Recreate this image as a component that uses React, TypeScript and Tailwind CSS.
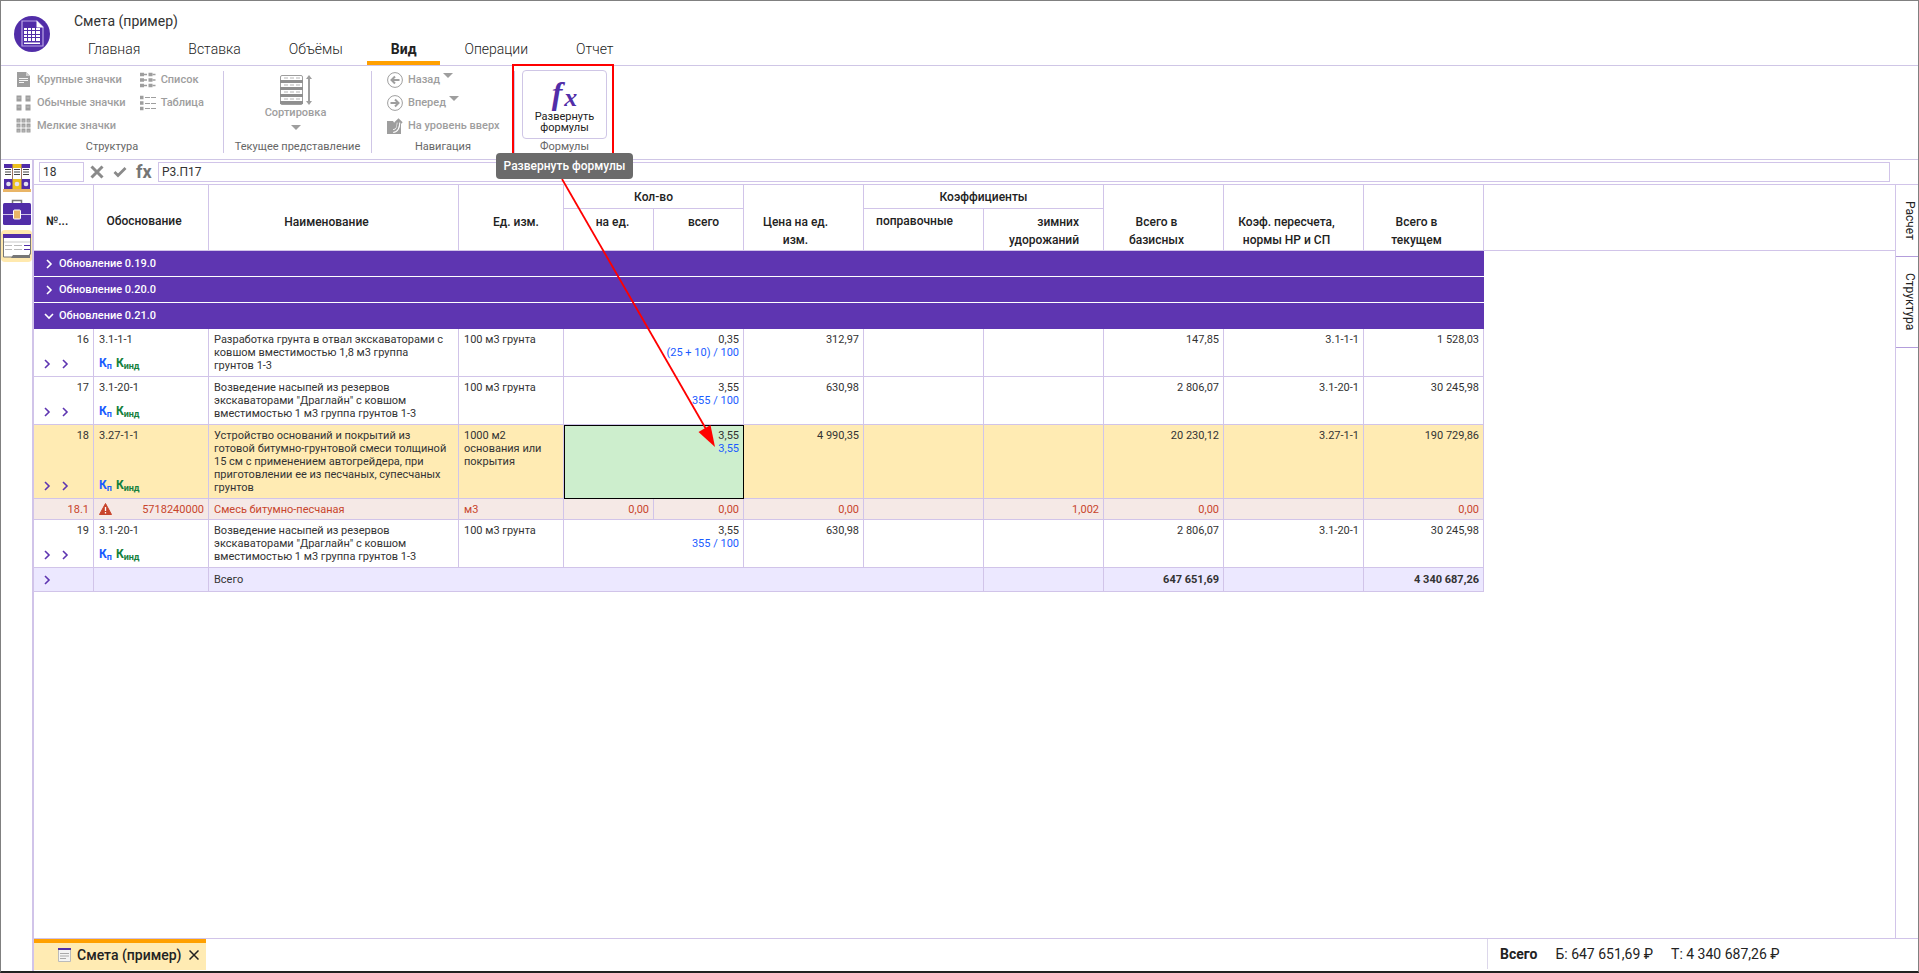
import type { ReactNode } from "react";
import clsx from "clsx";

const TABS = ["Главная", "Вставка", "Объёмы", "Вид", "Операции", "Отчет"];
const GROUPS = ["Обновление 0.19.0", "Обновление 0.20.0", "Обновление 0.21.0"];

type Row = {
  num: string;
  code: string;
  name: string;
  unit: string;
  total: string;
  formula: string;
  price: string;
  base: string;
  coef: string;
  current: string;
  selected?: boolean;
};

const embankment = {
  code: "3.1-20-1",
  name: 'Возведение насыпей из резервов экскаваторами "Драглайн" с ковшом вместимостью 1 м3 группа грунтов 1-3',
  unit: "100 м3 грунта",
  total: "3,55",
  formula: "355 / 100",
  price: "630,98",
  base: "2 806,07",
  coef: "3.1-20-1",
  current: "30 245,98",
};

const ROWS: Row[] = [
  {
    num: "16",
    code: "3.1-1-1",
    name: "Разработка грунта в отвал экскаваторами с ковшом вместимостью 1,8 м3 группа грунтов 1-3",
    unit: "100 м3 грунта",
    total: "0,35",
    formula: "(25 + 10) / 100",
    price: "312,97",
    base: "147,85",
    coef: "3.1-1-1",
    current: "1 528,03",
  },
  { num: "17", ...embankment },
  {
    num: "18",
    code: "3.27-1-1",
    name: "Устройство оснований и покрытий из готовой битумно-грунтовой смеси толщиной 15 см с применением автогрейдера, при приготовлении ее из песчаных, супесчаных грунтов",
    unit: "1000 м2 основания или покрытия",
    total: "3,55",
    formula: "3,55",
    price: "4 990,35",
    base: "20 230,12",
    coef: "3.27-1-1",
    current: "190 729,86",
    selected: true,
  },
];

const LAST_ROW: Row = { num: "19", ...embankment };

// ICONS
const LogoIcon = () => (
  <svg width="36" height="36" viewBox="0 0 36 36">
    <circle cx="18" cy="18" r="18" fill="#512da8" />
    <path d="M8 5h15l6 6v19H8z" fill="none" stroke="#b9a6e6" strokeWidth="1.2" />
    <path d="M22.500 4.500v7h7z" fill="#fff" />
    <path d="M10 12h16v13H10zM10 26.500h16v1.500H10z" fill="#fff" />
    <path d="M10 14.500h16M10 18.500h16M10 21.500h16M13.500 12v13M17.500 12v13M21.500 12v13" stroke="#512da8" />
  </svg>
);

const LargeIcon = () => (
  <svg width="16" height="16" viewBox="0 0 16 16">
    <path d="M1 0h9l4 4v11H1z" fill="#9e9e9e" />
    <path d="M10 0v4h4z" fill="#d0d0d0" />
    <path d="M3 6.500h9M3 8.500h9M3 10.500h5" stroke="#f5f5f5" />
  </svg>
);

const GridIcon = ({ cells }: { cells: number }) => {
  const step = cells === 2 ? 9 : 5;
  const width = cells === 2 ? 5 : 4;
  const height = cells === 2 ? 6 : 4;
  const idx = Array.from({ length: cells }, (_, i) => i);
  return (
    <svg width="16" height="16" viewBox="0 0 16 16">
      {idx.map((r) =>
        idx.map((c) => (
          <g key={`${r}-${c}`}>
            <rect x={c * step + 0.5} y={r * step + 0.5} width={width} height={height} fill="#9e9e9e" />
            <path d={`M${c * step + 1.5} ${r * step + 3}h${width - 2}`} stroke="#cfcfcf" strokeWidth="0.8" />
          </g>
        ))
      )}
    </svg>
  );
};

const ListIcon = () => (
  <svg width="16" height="16" viewBox="0 0 16 16" stroke="#9e9e9e">
    <path d="M0 2.500h4M0 8h4M0 13.500h4M8.500 2.500h4M8.500 8h4M8.500 13.500h4" strokeWidth="3.5" />
    <path d="M4 2.500h3M4 8h3M4 13.500h3M12.500 2.500h3M12.500 8h3M12.500 13.500h3" strokeWidth="1.5" />
  </svg>
);

const TableIcon = () => (
  <svg width="16" height="16" viewBox="0 0 16 16" stroke="#9e9e9e">
    <path d="M0 2.500h3.500M0 8h3.500M0 13.500h3.500" strokeWidth="3.5" />
    <path d="M5 2.500h5M11 2.500h5M5 8.500h5M11 8.500h5M5 13.500h5M11 13.500h5" />
  </svg>
);

const SortIcon = () => (
  <svg width="32" height="30" viewBox="0 0 32 30">
    <rect x="0.5" y="0.5" width="22" height="29" rx="1.5" fill="#fff" stroke="#9e9e9e" />
    <path d="M0 6.500h23M0 13.500h23M0 20.500h23M0 27.500h23" stroke="#8f8f8f" strokeWidth="3" />
    <path d="M4 3h4M10 3h4M16 3h4M4 10h4M10 10h4M16 10h4M4 17h4M10 17h4M16 17h4M4 24h4M10 24h4M16 24h4" stroke="#b5b5b5" />
    <path d="M29 3v24" stroke="#9e9e9e" strokeWidth="2" />
    <path d="M29 0l3 4h-6zM29 30l3-4h-6z" fill="#9e9e9e" />
  </svg>
);

const ArrowIcon = ({ back }: { back?: boolean }) => (
  <svg width="16" height="16" viewBox="0 0 16 16" fill="none" stroke="#9e9e9e">
    <circle cx="8" cy="8" r="7.4" />
    <path d={back ? "M12.500 8H5M8 4.500L4.500 8L8 11.500" : "M3.500 8H11M8 4.500L11.500 8L8 11.500"} strokeWidth="2" />
  </svg>
);

const LevelUpIcon = () => (
  <svg width="16" height="16" viewBox="0 0 16 16">
    <path d="M0 3h6l1 1.500h7V16H0z" fill="#9e9e9e" />
    <path d="M6 13c4 0 5.500-4 5.500-8" fill="none" stroke="#fff" strokeWidth="3.5" />
    <path d="M6 13c4 0 5.500-4 5.500-11M8 5l3.500-3.500L15 5" fill="none" stroke="#9e9e9e" strokeWidth="1.8" />
  </svg>
);

const Caret = () => (
  <svg width="10" height="5" viewBox="0 0 10 5">
    <path d="M0 0h10L5 5z" fill="#9e9e9e" />
  </svg>
);

const Chevron = ({ down, className }: { down?: boolean; className?: string }) => (
  <svg width="10" height="10" viewBox="0 0 10 10" className={className} fill="none" stroke="currentColor" strokeWidth="1.6">
    <path d={down ? "M1 3l4 4l4-4" : "M3 1l4 4l-4 4"} />
  </svg>
);

const BindersIcon = () => (
  <svg width="28" height="28" viewBox="0 0 28 28">
    <path d="M1 0h26v25H1z" fill="#512da8" />
    <path d="M9.500 0h9v25h-9z" fill="#ecc11e" />
    <path d="M1 4h8v11H1zM10 4h8v11h-8zM19 4h8v11h-8z" fill="#fff" />
    <path d="M2 5.500h6M2 8h6M2 10.500h6M11 5.500h6M11 8h6M11 10.500h6M20 5.500h6M20 8h6M20 10.500h6" stroke="#444" />
    <circle cx="5.5" cy="20" r="2.3" fill="#e4e0f0" />
    <circle cx="14" cy="20" r="2.3" fill="#e4e0f0" />
    <circle cx="23" cy="20" r="2.3" fill="#e4e0f0" />
    <path d="M0 25h28v3H0z" fill="#e9b567" />
  </svg>
);

const BriefcaseIcon = () => (
  <svg width="28" height="28" viewBox="0 0 28 28">
    <path d="M9.500 6V2.500h9V6" fill="none" stroke="#777" strokeWidth="1.5" />
    <rect x="0" y="5" width="28" height="22" rx="1.5" fill="#512da8" />
    <path d="M0 16.500h28" stroke="#d1c4e9" />
    <rect x="10.5" y="12" width="7" height="9" rx="1" fill="#e9b567" stroke="#fff" />
  </svg>
);

const FormIcon = () => (
  <svg width="28" height="25" viewBox="0 0 28 25">
    <path d="M0.500 1h27v19l-3 3H0.500z" fill="#fff" stroke="#777" />
    <path d="M0 0h28v4H0z" fill="#512da8" />
    <path d="M1 8h26" stroke="#e4e4e4" strokeWidth="2" />
    <path d="M2 11.500h7M11 11.500h8M2 15.500h7M11 15.500h8" stroke="#bbb" />
    <path d="M21 11.500h6M21 15.500h6" stroke="#512da8" />
    <path d="M8 24l2-3h16l1-2v5z" fill="#777" />
  </svg>
);

const RIBBON_TEXT = "text-[11px] leading-4 font-medium text-[#9e9e9e]";

const RibbonItem = ({ icon, label, caret }: { icon: ReactNode; label: string; caret?: boolean }) => (
  <button className={clsx("flex h-[23px] items-center gap-[5px] whitespace-nowrap", RIBBON_TEXT)}>
    {icon}
    <span>{label}</span>
    {caret && (
      <span className="-ml-[2px] self-start pt-[5px]">
        <Caret />
      </span>
    )}
  </button>
);

const RibbonGroup = ({ label, className, children }: { label: string; className: string; children: ReactNode }) => (
  <section className={clsx("flex h-[82px] flex-col justify-between", className)}>
    <div className="flex-1">{children}</div>
    <p className="text-center text-[11px] leading-3 whitespace-nowrap text-[#666]">{label}</p>
  </section>
);

const Header = () => (
  <header className="flex h-[65px] border-b border-[#cfc6e6]">
    <div className="pt-[15px] pl-[13px]">
      <LogoIcon />
    </div>
    <div className="flex flex-1 flex-col justify-between">
      <h1 className="pt-[10px] pl-6 text-sm leading-5 text-[#333]">Смета (пример)</h1>
      <nav className="flex pl-[14px]">
        {TABS.map((tab) => (
          <a
            key={tab}
            href="#"
            className={clsx(
              "h-[30px] border-b-4 px-6 pt-1 text-sm leading-5 text-[#222]",
              tab === "Вид" ? "border-[#ffa000] font-bold" : "border-transparent font-light"
            )}
          >
            {tab}
          </a>
        ))}
      </nav>
    </div>
  </header>
);

const Ribbon = () => (
  <div className="flex h-[94px] border-b border-[#cfc6e6] pt-[5px]">
    <RibbonGroup label="Структура" className="w-[223px] border-r border-[#cfc6e6]">
      <div className="-mt-[3px] flex gap-[14px] pl-[15px]">
        <div>
          <RibbonItem icon={<LargeIcon />} label="Крупные значки" />
          <RibbonItem icon={<GridIcon cells={2} />} label="Обычные значки" />
          <RibbonItem icon={<GridIcon cells={3} />} label="Мелкие значки" />
        </div>
        <div>
          <RibbonItem icon={<ListIcon />} label="Список" />
          <RibbonItem icon={<TableIcon />} label="Таблица" />
        </div>
      </div>
    </RibbonGroup>
    <RibbonGroup label="Текущее представление" className="w-[148px] border-r border-[#cfc6e6]">
      <button className={clsx("flex w-full flex-col items-center pt-1 pr-1", RIBBON_TEXT)}>
        <SortIcon />
        <span className="pb-1">Сортировка</span>
        <Caret />
      </button>
    </RibbonGroup>
    <RibbonGroup label="Навигация" className="w-[143px] border-r border-[#cfc6e6]">
      <div className="-mt-[3px] pl-[15px]">
        <RibbonItem icon={<ArrowIcon back />} label="Назад" caret />
        <RibbonItem icon={<ArrowIcon />} label="Вперед" caret />
        <RibbonItem icon={<LevelUpIcon />} label="На уровень вверх" />
      </div>
    </RibbonGroup>
    <div className="relative">
      <RibbonGroup label="Формулы" className="px-[7px]">
        <button className="-mt-px flex h-[69px] w-[85px] flex-col items-center rounded-[4px] border border-[#cfc6e6] pt-2 text-[11px] leading-[11px] text-[#222]">
          <span className="flex h-[32px] items-start gap-[2px] font-['Liberation_Serif',serif] font-bold text-[#512da8] italic">
            <span className="text-[32px] leading-7">f</span>
            <span className="pt-[9px] text-[26px] leading-5">x</span>
          </span>
          Развернуть формулы
        </button>
      </RibbonGroup>
      <div className="pointer-events-none absolute -top-[7px] -left-[3px] h-[91px] w-[102px] border-2 border-[#f00]" />
      <div
        role="tooltip"
        className="absolute top-[82px] -left-[19px] z-20 h-[26px] w-[137px] rounded-[4px] bg-[#6b6b6b] text-center text-xs leading-[26px] font-medium whitespace-nowrap text-white"
      >
        Развернуть формулы
      </div>
      <svg className="pointer-events-none absolute top-[108px] left-[46px] z-10" width="156" height="270" viewBox="0 0 156 270">
        <path d="M1 0L145 250" stroke="#f00" strokeWidth="1.8" />
        <path d="M154 268L137.500 253L149.500 246z" fill="#f00" />
      </svg>
    </div>
  </div>
);

const SideBar = () => (
  <aside className="flex w-[31px] flex-col pt-1">
    <button aria-label="Сметы" className="flex h-[34px] justify-center">
      <BindersIcon />
    </button>
    <button aria-label="Портфель" className="flex h-8 justify-center">
      <BriefcaseIcon />
    </button>
    <button aria-label="Документ" className="flex h-8 items-center justify-center rounded-[4px] bg-[#ffe9ae]">
      <FormIcon />
    </button>
  </aside>
);

const FormulaBar = () => (
  <div className="flex h-[25px] items-center border-b border-[#d1c4e9] pr-7 pl-[5px] text-[#333]">
    <input aria-label="Позиция" defaultValue="18" className="h-5 w-[45px] border border-[#d1c4e9] px-[3px] text-xs" />
    <button aria-label="Отменить" className="ml-[6px]">
      <svg width="14" height="14" viewBox="0 0 14 14" stroke="#8a8a8a" strokeWidth="3">
        <path d="M1.500 1.500l11 11M12.500 1.500l-11 11" />
      </svg>
    </button>
    <button aria-label="Применить" className="ml-[9px]">
      <svg width="14" height="12" viewBox="0 0 14 12" fill="none" stroke="#8a8a8a" strokeWidth="2.8">
        <path d="M1.500 6l3.500 3.500L12.500 2" />
      </svg>
    </button>
    <span className="ml-[9px] w-[22px] text-lg leading-5 font-bold text-[#757575]">fx</span>
    <input aria-label="Формула" defaultValue="Р3.П17" className="h-5 flex-1 border border-[#d1c4e9] px-[3px] text-xs" />
  </div>
);

const TH = "border-r border-b border-[#d1c4e9] align-top font-medium";

const Head = () => (
  <thead className="text-xs leading-[18px] text-[#222]">
    <tr className="h-6">
      <th rowSpan={2} className={clsx(TH, "pt-[27px] pl-3 text-left")}>№...</th>
      <th rowSpan={2} className={clsx(TH, "pt-[27px] pr-[14px]")}>Обоснование</th>
      <th rowSpan={2} className={clsx(TH, "pt-[28px] pr-[14px]")}>Наименование</th>
      <th rowSpan={2} className={clsx(TH, "pt-[28px] pl-[10px]")}>Ед. изм.</th>
      <th colSpan={2} className={clsx(TH, "pt-[3px]")}>Кол-во</th>
      <th rowSpan={2} className={clsx(TH, "pt-[28px] pr-6 pl-2")}>Цена на ед. изм.</th>
      <th colSpan={2} className={clsx(TH, "pt-[3px]")}>Коэффициенты</th>
      <th rowSpan={2} className={clsx(TH, "pt-[28px] pr-[30px] pl-4")}>Всего в базисных</th>
      <th rowSpan={2} className={clsx(TH, "pt-[28px] pr-[14px]")}>Коэф. пересчета, нормы НР и СП</th>
      <th rowSpan={2} className={clsx(TH, "pt-[28px] pr-[30px] pl-4")}>Всего в текущем</th>
      <th rowSpan={2} className="border-b border-[#d1c4e9]" />
    </tr>
    <tr className="h-[42px]">
      <th className={clsx(TH, "pt-1 pl-2")}>на ед.</th>
      <th className={clsx(TH, "pt-1 pl-[10px]")}>всего</th>
      <th className={clsx(TH, "pt-[3px] pr-[18px]")}>поправочные</th>
      <th className={clsx(TH, "pt-1 pr-6 text-right")}>зимних удорожаний</th>
    </tr>
  </thead>
);

const TD = "border-r border-b border-[#d1c4e9] pt-1 pb-[3px] pl-[5px] pr-1 align-top";
const NUM = "text-right";

const ItemRow = ({ row }: { row: Row }) => (
  <tr className={row.selected ? "h-[74px]" : "h-12"}>
    {[
      <div className="flex h-full flex-col justify-between">
        <span className="text-right">{row.num}</span>
        <span className="flex gap-2 pb-1 pl-[3px] text-[#5e35b1]">
          <Chevron />
          <Chevron />
        </span>
      </div>,
      <div className="flex h-full flex-col justify-between">
        <span>{row.code}</span>
        <span className="flex gap-1 pb-[3px] text-xs leading-[13px] font-bold">
          <span className="text-[#1a5cff]">К<sub className="text-[9px]">п</sub></span>
          <span className="text-[#15803d]">К<sub className="text-[9px]">инд</sub></span>
        </span>
      </div>,
    ].map((content, i) => (
      <td key={i} className={clsx(TD, row.selected ? "h-[74px] bg-[#ffebb3]" : "h-12")}>
        {content}
      </td>
    ))}
    <td className={clsx(TD, row.selected && "bg-[#ffebb3]")}>
      <div className="pr-[6px]">{row.name}</div>
    </td>
    <td className={clsx(TD, row.selected && "bg-[#ffebb3]")}>{row.unit}</td>
    <td colSpan={2} className={clsx(TD, NUM, row.selected && "bg-[#cdeecd] outline outline-offset-[-1px] outline-black")}>
      {row.total}
      <div className="text-[#1a5cff]">{row.formula}</div>
    </td>
    {[row.price, "", "", row.base, row.coef, row.current].map((value, i) => (
      <td key={i} className={clsx(TD, NUM, row.selected && "bg-[#ffebb3]")}>{value}</td>
    ))}
    <td />
  </tr>
);

const ResourceRow = () => (
  <tr className="h-[21px] text-[#c8452c]">
    <td className={clsx(TD, NUM, "bg-[#f5e9e6]")}>18.1</td>
    <td className={clsx(TD, "bg-[#f5e9e6]")}>
      <span className="flex justify-between">
        <svg width="13" height="12" viewBox="0 0 13 12">
          <path d="M6.500 0.500L12.500 11.500H0.500z" fill="#c8452c" stroke="#c8452c" strokeLinejoin="round" />
          <path d="M6.500 4v4M6.500 9v1.500" stroke="#fff" strokeWidth="1.3" />
        </svg>
        5718240000
      </span>
    </td>
    <td className={clsx(TD, "bg-[#f5e9e6]")}>Смесь битумно-песчаная</td>
    <td className={clsx(TD, "bg-[#f5e9e6]")}>м3</td>
    {["0,00", "0,00", "0,00", "", "1,002", "0,00", "", "0,00"].map((value, i) => (
      <td key={i} className={clsx(TD, NUM, "bg-[#f5e9e6]")}>{value}</td>
    ))}
    <td />
  </tr>
);

const SUM = "border-r border-b border-[#d1c4e9] bg-[#ece8ff] pl-[5px] pr-1";

const EstimateTable = () => (
  <table className="w-full table-fixed border-separate border-spacing-0 text-[11px] leading-[13px] text-[#333]">
    <colgroup>
      <col className="w-[60px]" />
      <col className="w-[115px]" />
      <col className="w-[250px]" />
      <col className="w-[105px]" />
      <col className="w-[90px]" />
      <col className="w-[90px]" />
      <col className="w-[120px]" />
      <col className="w-[120px]" />
      <col className="w-[120px]" />
      <col className="w-[120px]" />
      <col className="w-[140px]" />
      <col className="w-[120px]" />
      <col />
    </colgroup>
    <Head />
    <tbody>
      {GROUPS.map((group, i) => (
        <tr key={group} className="h-[26px]">
          <td
            colSpan={12}
            className={clsx(
              "border-b bg-[#5e35b1] pl-[10px] font-medium text-white",
              i < 2 ? "border-white" : "border-[#5e35b1]"
            )}
          >
            <span className="flex items-center gap-[5px]">
              <Chevron down={i === 2} />
              {group}
            </span>
          </td>
          <td />
        </tr>
      ))}
      {ROWS.map((row) => (
        <ItemRow key={row.num} row={row} />
      ))}
      <ResourceRow />
      <ItemRow row={LAST_ROW} />
      <tr className="h-6">
        <td className={SUM}>
          <Chevron className="ml-[3px] text-[#5e35b1]" />
        </td>
        <td className={SUM} />
        <td colSpan={6} className={SUM}>Всего</td>
        <td className={SUM} />
        <td className={clsx(SUM, NUM, "font-bold")}>647 651,69</td>
        <td className={SUM} />
        <td className={clsx(SUM, NUM, "font-bold")}>4 340 687,26</td>
        <td />
      </tr>
    </tbody>
  </table>
);

const SidePanels = () => (
  <div className="flex w-[23px] flex-col border-l border-[#d1c4e9] text-xs text-[#222]">
    <button className="h-[72px] border-b border-[#b39ddb] pl-[5px] [writing-mode:vertical-rl]">Расчет</button>
    <button className="h-[91px] border-b border-[#b39ddb] pl-[5px] [writing-mode:vertical-rl]">Структура</button>
  </div>
);

const Footer = () => (
  <footer className="flex h-8 justify-between text-sm text-[#222]">
    <div className="flex h-[31px] w-[172px] items-center border-t-4 border-[#ffa000] bg-[#ffebb3] pb-1 pl-6 font-medium">
      <svg width="13" height="14" viewBox="0 0 13 14" className="mr-[6px]">
        <path d="M0.500 0.500h12v13h-12z" fill="#f4f4f4" stroke="#bbb" />
        <path d="M0 0h13v2H0z" fill="#512da8" />
        <path d="M2 5.500h9M2 8h9M2 10.500h6" stroke="#aaa" />
      </svg>
      <a href="#">Смета (пример)</a>
      <button aria-label="Закрыть" className="ml-2">
        <svg width="10" height="10" viewBox="0 0 10 10" stroke="#222" strokeWidth="1.5">
          <path d="M0.500 0.500l9 9M9.500 0.500l-9 9" />
        </svg>
      </button>
    </div>
    <div className="flex h-[30px] w-[431px] items-center gap-[18px] border-l border-[#dcd7ea] pl-3">
      <b className="font-bold">Всего</b>
      <span>Б: 647 651,69 ₽</span>
      <span>Т: 4 340 687,26 ₽</span>
    </div>
  </footer>
);

export default function App() {
  return (
    <div className="flex h-screen flex-col border border-b-2 border-[#808080] border-b-[#222] bg-white font-['Roboto',sans-serif]">
      <Header />
      <Ribbon />
      <div className="flex min-h-0 flex-1">
        <SideBar />
        <div className="flex min-w-0 flex-1 flex-col border-l-2 border-[#d1c4e9]">
          <FormulaBar />
          <main className="flex min-h-0 flex-1 border-b border-[#d1c4e9]">
            <div className="min-w-0 flex-1">
              <EstimateTable />
            </div>
            <SidePanels />
          </main>
          <Footer />
        </div>
      </div>
    </div>
  );
}
